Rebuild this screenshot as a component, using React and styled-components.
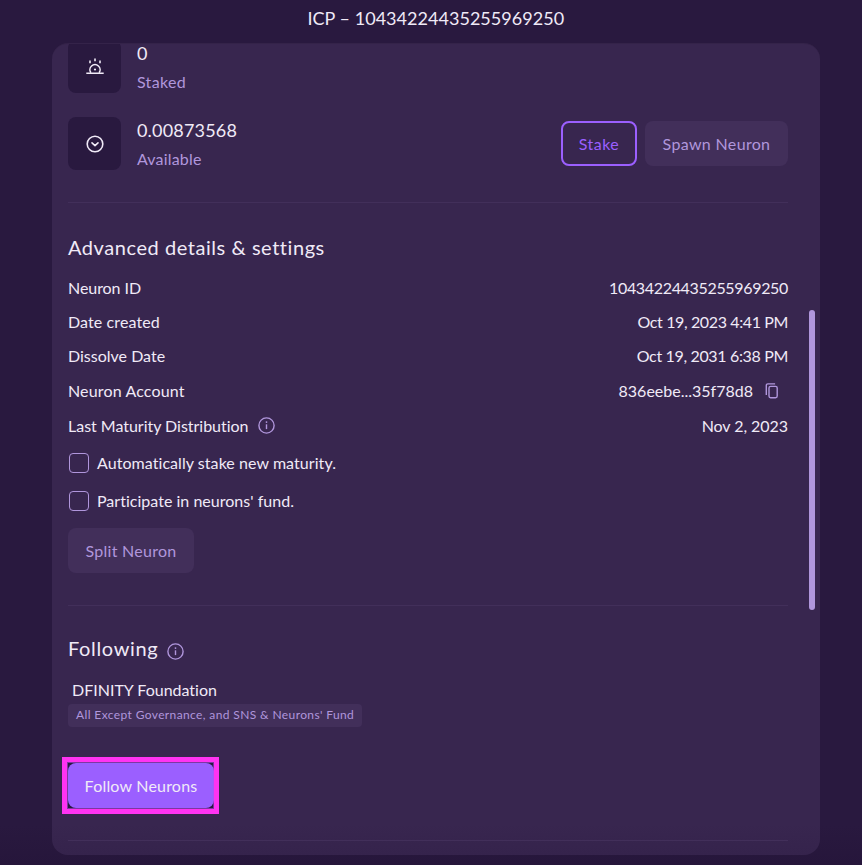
import React from 'react';
import styled, { createGlobalStyle } from 'styled-components';

const c = {
  page: '#29193f',
  panel: '#38264f',
  raised: '#422f5a',
  line: '#422f5a',
  accent: '#9b5fff',
  soft: '#b096dc',
  text: '#f0eaf7',
  marker: '#ff33f2',
};

const Global = createGlobalStyle`
  * { box-sizing: border-box; }
  body {
    margin: 0;
    background: ${c.page};
    color: ${c.text};
    font: 16px/20px Lato, 'Open Sans', sans-serif;
    font-variant-ligatures: none;
    overflow: hidden;
  }
`;

const Page = styled.div`
  display: flex;
  flex-direction: column;
  height: 865px;
  background: linear-gradient(${c.page} 825px, #26163b 865px);
`;

const Title = styled.h1`
  margin: 0 0 0 307.5px;
  height: 43px;
  font-size: 18px;
  font-weight: 400;
  line-height: 36px;
  letter-spacing: 0.03px;
  white-space: nowrap;
`;

const Panel = styled.main`
  position: relative;
  height: 812px;
  width: 768px;
  margin-left: 52px;
  padding: 0 32px 0 16px;
  border-radius: 16px;
  background: linear-gradient(${c.panel} 780px, #35234c 812px);
  overflow: hidden;
  border-top: 1px solid #342349;
`;

const ScrollThumb = styled.div`
  position: absolute;
  top: 266px;
  right: 5px;
  width: 6px;
  height: 300px;
  border-radius: 3px;
  background: ${c.soft};
`;

const Text = styled.span`
  letter-spacing: ${(p) => p.$track || 0}px;
  white-space: nowrap;
`;

const Balances = styled.section`
  display: flex;
  flex-direction: column;
  gap: 24px;
  height: 163px;
  margin-top: -4px;
  border-bottom: 1px solid ${c.line};
`;

const Balance = styled.div`
  display: flex;
  align-items: center;
  height: 53px;
`;

const IconTile = styled.div`
  display: grid;
  place-items: center;
  width: 53px;
  height: 53px;
  margin-right: 16px;
  border-radius: 8px;
  background: ${c.page};
`;

const Amount = styled.div`
  display: flex;
  flex-direction: column;
  flex: 1;
  line-height: 29px;
`;

const Value = styled(Text)`
  margin: 1px 0 -1px;
  font-size: 18px;
`;

const Label = styled(Text)`
  color: ${c.soft};
`;

const Actions = styled.div`
  display: flex;
  gap: 8px;
`;

const variants = {
  outline: `background: transparent; border: 2px solid ${c.accent}; color: ${c.accent};`,
  muted: `background: ${c.raised}; border: 0; color: ${c.soft};`,
  solid: `background: ${c.accent}; border: 0; color: ${c.text};`,
};

const Button = styled.button`
  flex: none;
  width: ${(p) => p.$width}px;
  height: 45px;
  padding: 0;
  border-radius: 8px;
  font: 400 16px/20px Lato, 'Open Sans', sans-serif;
  letter-spacing: ${(p) => p.$track}px;
  white-space: nowrap;
  ${(p) => variants[p.$variant]}
`;

const Heading = styled.h2`
  display: flex;
  align-items: center;
  gap: 10px;
  height: 30px;
  margin: 0;
  font-size: 20px;
  font-weight: 400;
  letter-spacing: ${(p) => p.$track}px;

  svg { margin: 7px 0 0 -1px; }
`;

const Details = styled.section`
  height: 403px;
  padding-top: 29px;
  border-bottom: 1px solid ${c.line};
`;

const Rows = styled.div`
  padding-top: 9px;
`;

const Row = styled.div`
  display: flex;
  align-items: center;
  justify-content: space-between;
  height: ${(p) => p.$height}px;
`;

const Cell = styled.div`
  display: flex;
  align-items: center;
  gap: 9px;
`;

const CopyCell = styled(Cell)`
  gap: 12px;
  padding-right: 9px;
`;

const Checks = styled.div`
  padding-top: 1px;
`;

const Check = styled.label`
  display: flex;
  align-items: center;
  gap: 8px;
  height: 38px;
  padding-left: 1px;
`;

const Box = styled.span`
  width: 20px;
  height: 20px;
  border: 1px solid ${c.soft};
  border-radius: 4px;
`;

const SplitSlot = styled.div`
  padding-top: 8px;
`;

const Following = styled.section`
  height: 235px;
  padding-top: 27px;
  border-bottom: 1px solid ${c.line};
`;

const Followee = styled.div`
  display: flex;
  flex-direction: column;
  align-items: flex-start;
  padding-top: 17px;
`;

const Name = styled(Text)`
  padding: 0 0 4px 4px;
  line-height: 20px;
`;

const Tag = styled.span`
  width: 294px;
  height: 23px;
  padding-left: 8px;
  border-radius: 4px;
  background: ${c.raised};
  color: ${c.soft};
  font-size: 12px;
  line-height: 22px;
  letter-spacing: 0.38px;
  white-space: nowrap;
`;

const FollowSlot = styled.div`
  position: relative;
  width: 146px;
  height: 45px;
  margin-top: 36px;
  background: ${c.page};
`;

const Marker = styled.div`
  position: absolute;
  inset: -6px;
  width: 157px;
  border: 5px solid ${c.marker};
  box-shadow: inset 0 0 0 1px #c447f680;
`;

const AlarmIcon = () => (
  <svg width="20" height="20" viewBox="0 0 20 20" fill="none" stroke={c.text} strokeWidth="1.6">
    <path d="M1.3 16.2h17.4" />
    <path d="M5.9 15.8a5.1 5.1 0 1 1 8.2 0" />
    <path d="M10 1.6v2.6M5 3.4v2.8M15 3.4v2.8" />
    <circle cx="10" cy="12.5" r="1.1" fill={c.text} stroke="none" />
  </svg>
);

const AvailableIcon = () => (
  <svg width="20" height="20" viewBox="0 0 20 20" fill="none" stroke={c.text} strokeWidth="1.6">
    <circle cx="10" cy="10" r="7.8" />
    <path d="M7 8.8l3 2.8 3-2.8" strokeLinecap="round" strokeLinejoin="round" />
  </svg>
);

const InfoIcon = () => (
  <svg width="17" height="17" viewBox="0 0 17 17" fill="none" stroke={c.soft}>
    <circle cx="8.5" cy="8.5" r="7.6" strokeWidth="1.4" />
    <path d="M8.5 7.3v4.8" strokeWidth="1.4" />
    <circle cx="8.5" cy="5.1" r="0.9" fill={c.soft} stroke="none" />
  </svg>
);

const CopyIcon = () => (
  <svg width="14" height="16" viewBox="0 0 14 16" fill="none" stroke={c.soft} strokeWidth="1.4">
    <rect x="4" y="3.4" width="8.2" height="11.3" rx="1.6" />
    <path d="M1.3 12V2.5C1.3 1.5 1.9.9 2.9.9h7.2" />
  </svg>
);

export default function App() {
  return (
    <>
      <Global />
      <Page>
        <Title>ICP – 10434224435255969250</Title>
        <Panel>
          <Balances>
            <Balance>
              <IconTile><AlarmIcon /></IconTile>
              <Amount>
                <Value>0</Value>
                <Label $track={0.3}>Staked</Label>
              </Amount>
            </Balance>
            <Balance>
              <IconTile><AvailableIcon /></IconTile>
              <Amount>
                <Value $track={0.18}>0.00873568</Value>
                <Label $track={0.17}>Available</Label>
              </Amount>
              <Actions>
                <Button $variant="outline" $width={76} $track={0.5}>Stake</Button>
                <Button $variant="muted" $width={143} $track={0.33}>Spawn Neuron</Button>
              </Actions>
            </Balance>
          </Balances>

          <Details>
            <Heading $track={0.55}>Advanced details &amp; settings</Heading>
            <Rows>
              <Row $height={34}>
                <Text $track={-0.06}>Neuron ID</Text>
                <Text $track={-0.33}>10434224435255969250</Text>
              </Row>
              <Row $height={34}>
                <Text $track={0.1}>Date created</Text>
                <Text $track={-0.38}>Oct 19, 2023 4:41 PM</Text>
              </Row>
              <Row $height={34}>
                <Text>Dissolve Date</Text>
                <Text $track={-0.34}>Oct 19, 2031 6:38 PM</Text>
              </Row>
              <Row $height={35}>
                <Text $track={0.15}>Neuron Account</Text>
                <CopyCell>
                  <Text>836eebe...35f78d8</Text>
                  <CopyIcon />
                </CopyCell>
              </Row>
              <Row $height={35}>
                <Cell>
                  <Text $track={-0.02}>Last Maturity Distribution</Text>
                  <InfoIcon />
                </Cell>
                <Text $track={-0.05}>Nov 2, 2023</Text>
              </Row>
            </Rows>
            <Checks>
              <Check>
                <Box />
                <Text $track={0.06}>Automatically stake new maturity.</Text>
              </Check>
              <Check>
                <Box />
                <Text $track={0.02}>Participate in neurons' fund.</Text>
              </Check>
            </Checks>
            <SplitSlot>
              <Button $variant="muted" $width={126} $track={0.27}>Split Neuron</Button>
            </SplitSlot>
          </Details>

          <Following>
            <Heading $track={0.65}>
              Following
              <InfoIcon />
            </Heading>
            <Followee>
              <Name>DFINITY Foundation</Name>
              <Tag>All Except Governance, and SNS &amp; Neurons' Fund</Tag>
            </Followee>
            <FollowSlot>
              <Button $variant="solid" $width={146} $track={0.2}>Follow Neurons</Button>
              <Marker />
            </FollowSlot>
          </Following>
          <ScrollThumb />
        </Panel>
      </Page>
    </>
  );
}
